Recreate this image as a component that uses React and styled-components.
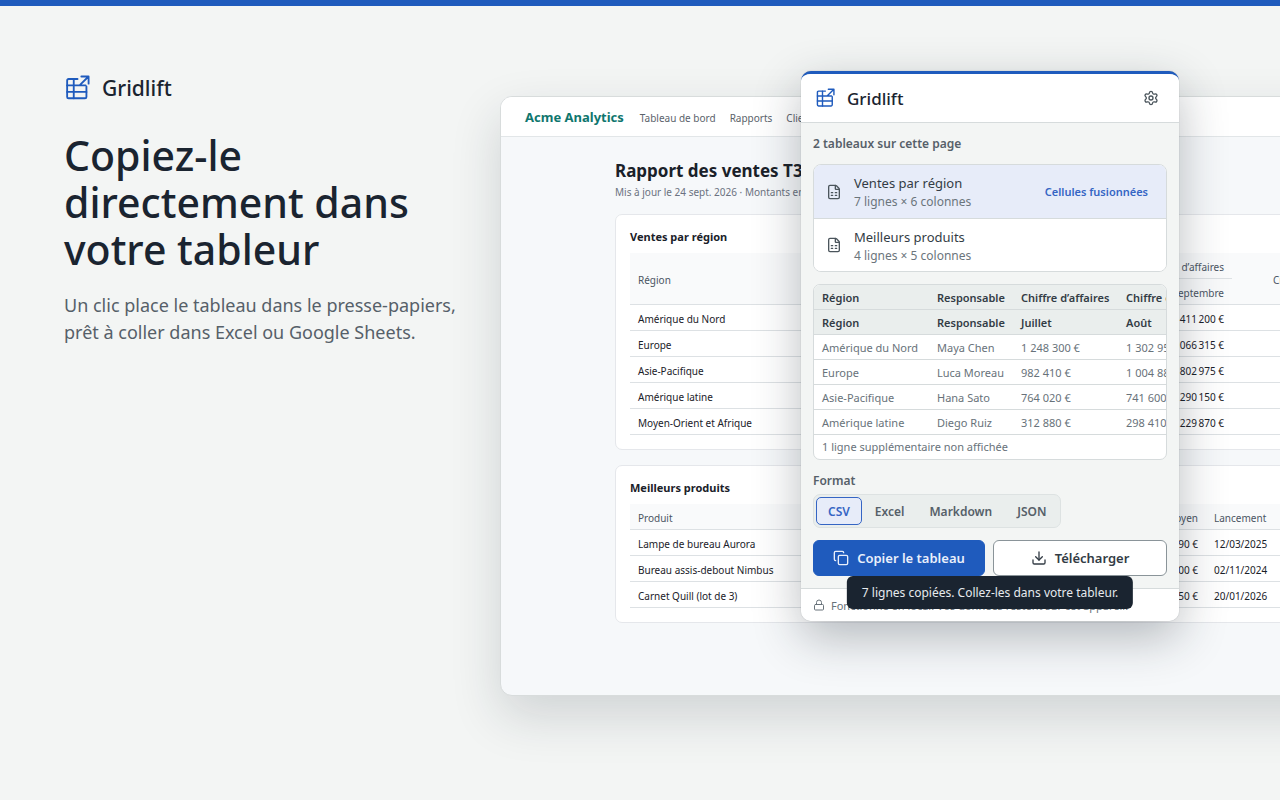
import React from "react";
import styled, { createGlobalStyle } from "styled-components";
import { Copy, Download, FileSpreadsheet, Lock, Settings } from "lucide-react";

const Global = createGlobalStyle`
  *, *::before, *::after { box-sizing: border-box; }
  body {
    margin: 0;
    background: #f3f5f4;
    color: #1a2430;
    font-family: "Segoe UI", "Noto Sans", "Open Sans", sans-serif;
  }
  h1, h2, h3, p { margin: 0; }
  button { font: inherit; color: inherit; cursor: pointer; }
  table { border-collapse: separate; border-spacing: 0; }
`;

const Page = styled.main`
  min-height: 100vh;
  border-top: 6px solid #1f5bbd;
  display: flex;
  align-items: flex-start;
  overflow: hidden;
`;

const Intro = styled.section`
  flex: 0 0 500px;
  padding: 68px 20px 0 64px;
`;

const Brand = styled.div`
  display: flex;
  align-items: center;
  gap: 12px;
  height: 28px;
  font-size: ${(p) => p.$size}px;
  font-weight: 500;
`;

const Title = styled.h1`
  margin-top: 30px;
  font-size: 41px;
  line-height: 47px;
  font-weight: 500;
`;

const Lead = styled.p`
  margin-top: 19px;
  font-size: 18px;
  line-height: 27px;
  color: #566069;
  white-space: nowrap;
`;

const Stage = styled.section`
  position: relative;
  flex: 0 0 1120px;
  padding-top: 90px;
`;

const Window = styled.div`
  min-height: 600px;
  border: 1px solid #d8dcdc;
  border-radius: 12px;
  overflow: hidden;
  background: #f6f8fa;
  box-shadow: 0 20px 50px rgba(26, 36, 48, 0.16);
`;

const SiteBar = styled.header`
  display: flex;
  align-items: center;
  gap: 14px;
  height: 40px;
  padding: 0 24px;
  background: #fff;
  border-bottom: 1px solid #e2e6e8;
  font-size: 10px;
`;

const SiteName = styled.strong`
  margin-right: 2px;
  font-size: 13px;
  font-weight: 700;
  color: #0f766e;
`;

const SiteLink = styled.a`
  padding-top: 2px;
  color: #5b636b;
  text-decoration: none;
`;

const Report = styled.div`
  width: 890px;
  margin: 0 auto;
  padding-top: 22px;
  color: #1a2129;
`;

const ReportTitle = styled.h2`
  font-size: 17px;
  line-height: 24px;
  font-weight: 700;
`;

const ReportMeta = styled.p`
  margin-bottom: 13px;
  font-size: 10px;
  line-height: 18px;
  color: #6b7280;
`;

const Panel = styled.section`
  margin-bottom: 15px;
  padding: 14px;
  background: #fff;
  border: 1px solid #e5e7eb;
  border-radius: 7px;
`;

const PanelTitle = styled.h3`
  margin-bottom: 8px;
  font-size: 11px;
  line-height: 16px;
  font-weight: 700;
`;

const DataTable = styled.table`
  width: 100%;
  table-layout: fixed;
  font-size: 10px;
  line-height: 14px;
  th, td {
    height: 26px;
    padding: 2px 8px 0;
    text-align: left;
    white-space: nowrap;
    border-bottom: 1px solid #dde1e4;
  }
  th { font-weight: 400; color: #4b5563; background: #f9fafb; }
  .num { text-align: right; }
  .wide { padding-left: 41px; }
`;

const Popup = styled.aside`
  position: absolute;
  top: 65px;
  left: 301px;
  width: 378px;
  overflow: hidden;
  background: #f3f5f4;
  border-top: 3px solid #1f5bbd;
  border-radius: 10px;
  box-shadow: 0 16px 48px rgba(26, 36, 48, 0.3), 0 0 1px rgba(26, 36, 48, 0.4);
`;

const PopupHeader = styled.header`
  display: flex;
  align-items: center;
  justify-content: space-between;
  height: 49px;
  padding: 0 20px 0 14px;
  background: #fff;
  border-bottom: 1px solid #d6dbdc;
`;

const IconButton = styled.button`
  display: flex;
  padding: 0;
  border: 0;
  background: none;
  color: #4b555c;
`;

const PopupBody = styled.div`
  display: flex;
  flex-direction: column;
  gap: 12px;
  padding: 12px;
`;

const Label = styled.h3`
  font-size: 12px;
  line-height: 17px;
  font-weight: 600;
  color: #566069;
`;

const TableList = styled.div`
  overflow: hidden;
  background: #fff;
  border: 1px solid #d6dbdc;
  border-radius: 8px;
`;

const TableChoice = styled.button`
  display: flex;
  align-items: center;
  gap: 12px;
  width: 100%;
  height: ${(p) => (p.$active ? 54 : 52)}px;
  padding: 0 18px 0 12px;
  border: 0;
  border-bottom: ${(p) => (p.$active ? "1px solid #d6dbdc" : "0")};
  background: ${(p) => (p.$active ? "#e7ecf9" : "#fff")};
  color: #4b555c;
  text-align: left;
`;

const ChoiceText = styled.span`
  flex: 1;
  display: grid;
  gap: 1px;
  padding-top: 2px;
  font-size: 13px;
  line-height: 18px;
  color: #333c45;
  small { font-size: 12px; color: #6b757c; }
`;

const Tag = styled.span`
  font-size: 11px;
  font-weight: 600;
  color: #3565c4;
`;

const Preview = styled.div`
  overflow: hidden;
  background: #fff;
  border: 1px solid #d6dbdc;
  border-radius: 7px;
  font-size: 11px;
  color: #68727a;
`;

const PreviewTable = styled.table`
  width: 420px;
  table-layout: fixed;
  line-height: 16px;
  th, td {
    height: 25px;
    padding: 1px 8px 0;
    text-align: left;
    white-space: nowrap;
    border-bottom: 1px solid #d6dbdc;
  }
  th { font-weight: 600; color: #333c45; background: #eaeeed; }
`;

const More = styled.p`
  padding: 0 8px;
  line-height: 24px;
`;

const FormatGroup = styled.div`
  display: grid;
  justify-items: start;
  gap: 5px;
`;

const Segments = styled.div`
  display: flex;
  gap: 1px;
  padding: 2px;
  background: #eaeeed;
  border: 1px solid #dde2e2;
  border-radius: 7px;
`;

const Segment = styled.button`
  height: 28px;
  padding: 0 11px;
  border: 1px solid ${(p) => (p.$active ? "#3565c4" : "transparent")};
  border-radius: 5px;
  background: ${(p) => (p.$active ? "#e7ecf9" : "transparent")};
  color: ${(p) => (p.$active ? "#3565c4" : "#566069")};
  font-size: 12px;
  font-weight: 600;
`;

const Actions = styled.div`
  display: grid;
  grid-template-columns: 172px 1fr;
  gap: 8px;
`;

const Action = styled.button`
  display: flex;
  align-items: center;
  justify-content: center;
  gap: 8px;
  height: 36px;
  border: 1px solid ${(p) => (p.$primary ? "#1f5bbd" : "#8a9499")};
  border-radius: 6px;
  background: ${(p) => (p.$primary ? "#1f5bbd" : "#fff")};
  color: ${(p) => (p.$primary ? "#e9effb" : "#333c45")};
  font-size: 13px;
  font-weight: 600;
`;

const PopupFooter = styled.footer`
  display: flex;
  align-items: center;
  gap: 6px;
  height: 33px;
  padding: 0 12px;
  background: #fff;
  border-top: 1px solid #d6dbdc;
  font-size: 11px;
  color: #68727a;
  white-space: nowrap;
`;

const Toast = styled.div`
  position: absolute;
  bottom: 12px;
  left: 50%;
  transform: translateX(-50%);
  padding: 0 15px;
  border-radius: 6px;
  background: #1a2430;
  color: #e6eaee;
  font-size: 12px;
  line-height: 33px;
  white-space: nowrap;
`;

function Logo({ size }) {
  return (
    <svg width={size} height={size} viewBox="0 0 24 24" fill="none" stroke="#1f5bbd" strokeWidth="1.7" strokeLinecap="round" strokeLinejoin="round" aria-hidden="true">
      <path d="M12.500 3.700H4.200A1.300 1.300 0 0 0 2.900 5v15.200a1.300 1.300 0 0 0 1.300 1.300h15.200a1.300 1.300 0 0 0 1.300-1.300V10.500" />
      <path d="M2.900 9.600h17M2.900 15.600h17.800M9 3.700v17.800M14.800 9.200l7.800-7.800M16 1.400h6.700V8" />
    </svg>
  );
}

const sales = [
  ["Amérique du Nord", "Maya Chen", "1 248 300 €", "1 302 950 €", "1 411 200 €", "+13,1 %"],
  ["Europe", "Luca Moreau", "982 410 €", "1 004 880 €", "1 066 315 €", "+8,5 %"],
  ["Asie-Pacifique", "Hana Sato", "764 020 €", "741 600 €", "802 975 €", "+5,1 %"],
  ["Amérique latine", "Diego Ruiz", "312 880 €", "298 410 €", "290 150 €", "-7,3 %"],
  ["Moyen-Orient et Afrique", "Amina Diallo", "205 640 €", "218 300 €", "229 870 €", "+11,8 %"],
];

const products = [
  ["Lampe de bureau Aurora", "LB-204", "4 120", "89,90 €", "12/03/2025"],
  ["Bureau assis-debout Nimbus", "BN-118", "1 365", "549,00 €", "02/11/2024"],
  ["Carnet Quill (lot de 3)", "CQ-033", "9 870", "18,50 €", "20/01/2026"],
];

const narrow = (text) => text.replace(/(\d) (?=\d)/g, "$1\u202f");

export default function App() {
  return (
    <Page>
      <Global />
      <Intro>
        <Brand $size={21}><Logo size={26} />Gridlift</Brand>
        <Title>Copiez-le directement dans votre tableur</Title>
        <Lead>Un clic place le tableau dans le presse-papiers,<br />prêt à coller dans Excel ou Google Sheets.</Lead>
      </Intro>

      <Stage>
        <Window>
          <SiteBar>
            <SiteName>Acme Analytics</SiteName>
            <SiteLink href="#bord">Tableau de bord</SiteLink>
            <SiteLink href="#rapports">Rapports</SiteLink>
            <SiteLink href="#clients">Clients</SiteLink>
          </SiteBar>
          <Report>
            <ReportTitle>Rapport des ventes T3 2026</ReportTitle>
            <ReportMeta>Mis à jour le 24 sept. 2026 · Montants en euros</ReportMeta>
            <Panel>
              <PanelTitle>Ventes par région</PanelTitle>
              <DataTable>
                <colgroup>
                  <col width="190" /><col width="130" /><col width="94" /><col width="94" /><col width="94" /><col />
                </colgroup>
                <thead>
                  <tr>
                    <th rowSpan={2}>Région</th>
                    <th rowSpan={2}>Responsable</th>
                    <th colSpan={3} className="num">Chiffre d’affaires</th>
                    <th rowSpan={2} className="wide">Croissance</th>
                  </tr>
                  <tr>
                    <th className="num">Juillet</th>
                    <th className="num">Août</th>
                    <th className="num">Septembre</th>
                  </tr>
                </thead>
                <tbody>
                  {sales.map((row) => (
                    <tr key={row[0]}>
                      {row.map((cell, i) => <td key={i} className={i > 1 ? "num" : ""}>{narrow(cell)}</td>)}
                    </tr>
                  ))}
                </tbody>
              </DataTable>
            </Panel>
            <Panel>
              <PanelTitle>Meilleurs produits</PanelTitle>
              <DataTable>
                <colgroup>
                  <col width="210" /><col width="120" /><col width="120" /><col width="126" /><col />
                </colgroup>
                <thead>
                  <tr>
                    <th>Produit</th><th>Référence</th><th className="num">Unités</th>
                    <th className="num">Prix moyen</th><th>Lancement</th>
                  </tr>
                </thead>
                <tbody>
                  {products.map((row) => (
                    <tr key={row[0]}>
                      {row.map((cell, i) => <td key={i} className={i === 2 || i === 3 ? "num" : ""}>{cell}</td>)}
                    </tr>
                  ))}
                </tbody>
              </DataTable>
            </Panel>
          </Report>
        </Window>

        <Popup>
          <PopupHeader>
            <Brand $size={17}><Logo size={20} />Gridlift</Brand>
            <IconButton aria-label="Paramètres"><Settings size={16} /></IconButton>
          </PopupHeader>
          <PopupBody>
            <Label>2 tableaux sur cette page</Label>
            <TableList>
              <TableChoice $active>
                <FileSpreadsheet size={16} />
                <ChoiceText>Ventes par région<small>7 lignes × 6 colonnes</small></ChoiceText>
                <Tag>Cellules fusionnées</Tag>
              </TableChoice>
              <TableChoice>
                <FileSpreadsheet size={16} />
                <ChoiceText>Meilleurs produits<small>4 lignes × 5 colonnes</small></ChoiceText>
              </TableChoice>
            </TableList>
            <Preview>
              <PreviewTable>
                <colgroup><col width="115" /><col width="84" /><col width="105" /><col /></colgroup>
                <thead>
                  <tr><th>Région</th><th>Responsable</th><th>Chiffre d’affaires</th><th>Chiffre d’affaires</th></tr>
                  <tr><th>Région</th><th>Responsable</th><th>Juillet</th><th>Août</th></tr>
                </thead>
                <tbody>
                  {sales.slice(0, 4).map((row) => (
                    <tr key={row[0]}>{row.slice(0, 4).map((cell, i) => <td key={i}>{cell}</td>)}</tr>
                  ))}
                </tbody>
              </PreviewTable>
              <More>1 ligne supplémentaire non affichée</More>
            </Preview>
            <FormatGroup>
              <Label>Format</Label>
              <Segments>
                <Segment $active aria-pressed="true">CSV</Segment>
                <Segment aria-pressed="false">Excel</Segment>
                <Segment aria-pressed="false">Markdown</Segment>
                <Segment aria-pressed="false">JSON</Segment>
              </Segments>
            </FormatGroup>
            <Actions>
              <Action $primary><Copy size={16} />Copier le tableau</Action>
              <Action><Download size={16} />Télécharger</Action>
            </Actions>
          </PopupBody>
          <PopupFooter>
            <Lock size={12} />Fonctionne en local. Vos données restent sur cet appareil.
          </PopupFooter>
          <Toast role="status">7 lignes copiées. Collez-les dans votre tableur.</Toast>
        </Popup>
      </Stage>
    </Page>
  );
}
